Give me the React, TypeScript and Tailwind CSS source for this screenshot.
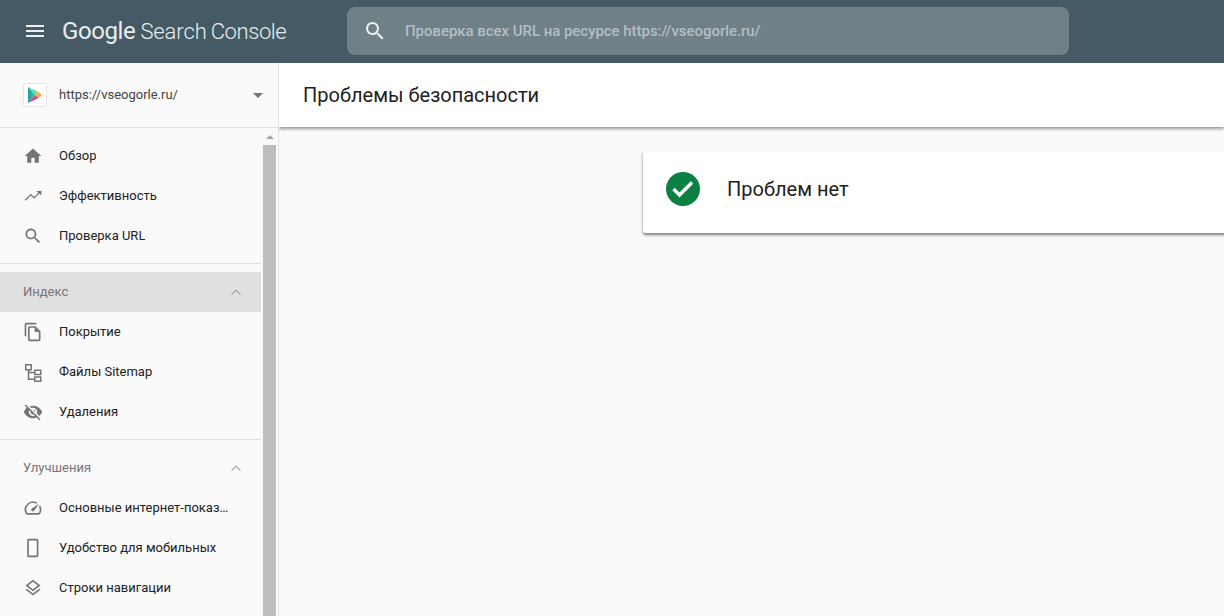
import React from "react";

const paths = {
  menu: "M3 18h18v-2H3v2zm0-5h18v-2H3v2zm0-7v2h18V6H3z",
  search:
    "M15.5 14h-.79l-.28-.27C15.41 12.59 16 11.11 16 9.5 16 5.91 13.09 3 9.5 3S3 5.91 3 9.5 5.91 16 9.5 16c1.61 0 3.09-.59 4.23-1.57l.27.28v.79l5 4.99L20.49 19l-4.99-5zm-6 0C7.01 14 5 11.99 5 9.5S7.01 5 9.5 5 14 7.01 14 9.5 11.99 14 9.5 14z",
  home: "M10 20v-6h4v6h5v-8h3L12 3 2 12h3v8z",
  trend:
    "M16 6l2.29 2.29-4.88 4.88-4-4L2 16.59 3 17.6l6.41-6.2 4 4 6.3-6.29L22 11.4V6z",
  copy: "M16 1H4c-1.1 0-2 .9-2 2v14h2V3h12V1zm-1 4H8c-1.1 0-1.99.9-1.99 2L6 21c0 1.1.89 2 1.99 2H19c1.1 0 2-.9 2-2V11l-6-6zM8 21V7h6v5h5v9H8z",
  eyeOff:
    "M12 7c2.76 0 5 2.24 5 5 0 .65-.13 1.26-.36 1.83l2.92 2.92c1.51-1.26 2.7-2.89 3.43-4.75-1.73-4.39-6-7.5-11-7.5-1.4 0-2.74.25-3.98.7l2.16 2.16C10.74 7.13 11.35 7 12 7zM2 4.27l2.28 2.28.46.46C3.08 8.3 1.78 10.02 1 12c1.73 4.39 6 7.5 11 7.5 1.55 0 3.03-.3 4.38-.84l.42.42L19.73 22 21 20.73 3.27 3 2 4.27zM7.53 9.8l1.55 1.55c-.05.21-.08.43-.08.65 0 1.66 1.34 3 3 3 .22 0 .44-.03.65-.08l1.55 1.55c-.67.33-1.41.53-2.2.53-2.76 0-5-2.24-5-5 0-.79.2-1.53.53-2.2zm4.31-.78l3.15 3.15.02-.16c0-1.66-1.34-3-3-3l-.17.01z",
  speed:
    "M20.38 8.57l-1.23 1.85a8 8 0 0 1-.22 7.58H5.07A8 8 0 0 1 15.58 6.85l1.85-1.23A10 10 0 0 0 3.35 19a2 2 0 0 0 1.72 1h13.85a2 2 0 0 0 1.74-1 10 10 0 0 0-.27-10.44zm-9.79 6.84a2 2 0 0 0 2.83 0l5.66-8.49-8.49 5.66a2 2 0 0 0 0 2.83z",
  phone:
    "M16.5 1h-10C5.4 1 5 1.9 5 3v18c0 1.1.4 2 1.5 2h10c1.1 0 2-.9 2-2V3c0-1.1-.9-2-2-2zm0 20H7V3h9.5v18z",
  layers:
    "M11.99 18.54l-7.37-5.73L3 14.07l9 7 9-7-1.63-1.27zM12 16l7.36-5.73L21 9l-9-7-9 7 1.63 1.27L12 16zm0-11.47L17.74 9 12 13.47 6.26 9 12 4.53z",
  chevron: "M12 8.5l-6.5 6.5 1 1L12 10.5l5.5 5.5 1-1z",
};

const Icon = ({ d, className }: { d: string; className: string }) => (
  <svg viewBox="0 0 24 24" className={className} fill="currentColor">
    <path d={d} />
  </svg>
);

const SitemapIcon = () => (
  <svg
    viewBox="0 0 20 20"
    className="h-5 w-5 shrink-0 text-[#757575]"
    fill="none"
    stroke="currentColor"
    strokeWidth="1.5"
  >
    <rect x="2.75" y="2.75" width="5.5" height="5" />
    <rect x="11.75" y="8.25" width="6" height="4.25" />
    <rect x="11.75" y="15" width="6" height="4.25" />
    <path d="M5.5 8v9.25h6.25M5.5 10.5h6.25" />
  </svg>
);

const NavItem = ({ icon, label }: { icon: string | React.ReactElement; label: string }) => (
  <div className="flex h-10 items-center gap-4 pl-[23px] pr-[30px]">
    {typeof icon === "string" ? (
      <Icon d={icon} className="h-5 w-5 shrink-0 text-[#757575]" />
    ) : (
      icon
    )}
    <span className="truncate text-[13px] text-[#212121]">{label}</span>
  </div>
);

const SectionHead = ({ label, active }: { label: string; active?: boolean }) => (
  <div
    className={`flex h-10 items-center justify-between pl-[23px] pr-4 ${
      active ? "bg-[#e0e0e0]" : ""
    }`}
  >
    <span className="text-[13px] text-[#757575]">{label}</span>
    <Icon d={paths.chevron} className="h-[18px] w-[18px] text-[#9e9e9e]" />
  </div>
);

const PlayLogo = () => (
  <svg viewBox="0 0 14 16" className="h-4 w-[14px]">
    <defs>
      <linearGradient id="playMain" x1="0" y1="0" x2="1" y2="0">
        <stop offset="0" stopColor="#1f9fa8" />
        <stop offset="1" stopColor="#2fd39a" />
      </linearGradient>
      <linearGradient id="playTip" x1="0" y1="0" x2="1" y2="0">
        <stop offset="0" stopColor="#f7c35a" />
        <stop offset="1" stopColor="#f79a45" />
      </linearGradient>
      <linearGradient id="playBottom" x1="0" y1="1" x2="1" y2="0">
        <stop offset="0" stopColor="#c2368f" />
        <stop offset="1" stopColor="#f04a6a" />
      </linearGradient>
    </defs>
    <path d="M0 0v16l7.5-8z" fill="url(#playMain)" />
    <path d="M0 0l7.5 8 3-3z" fill="#6fdb9a" />
    <path d="M0 16l7.5-8 3 3z" fill="url(#playBottom)" />
    <path d="M10.5 5L14 8l-3.5 3-3-3z" fill="url(#playTip)" />
  </svg>
);

export default function App() {
  return (
    <div className="flex h-[616px] w-[1224px] flex-col overflow-hidden bg-[#fafafa] font-['Roboto',sans-serif]">
      <header className="flex h-[63px] shrink-0 items-center bg-[#455a64] pb-px">
        <Icon d={paths.menu} className="ml-[23px] h-6 w-6 text-[#eceff1]" />
        <div className="ml-[15px] flex w-[285px] items-baseline font-light whitespace-nowrap text-[#e8ecee]">
          <span className="text-[24px] font-normal tracking-[-0.4px]">Google</span>
          <span className="ml-[5px] text-[22px] tracking-[-0.1px]">Search</span>
          <span className="ml-[4px] text-[22px] tracking-[-0.4px]">Console</span>
        </div>
        <div className="flex h-12 w-[722px] items-center rounded-lg bg-[#6f8087]">
          <Icon d={paths.search} className="ml-4 h-6 w-6 text-[#eceff1]" />
          <span className="ml-[18px] text-[15px] font-medium tracking-[-0.04px] text-[#b4bec2]">
            Проверка всех URL на ресурсе https://vseogorle.ru/
          </span>
        </div>
      </header>

      <div className="flex min-h-0 flex-1">
        <aside className="flex w-[279px] shrink-0 flex-col border-r border-[#e0e0e0]">
          <div className="flex h-[65px] shrink-0 items-center border-b border-[#e0e0e0] pl-[23px] pr-[15px]">
            <div className="flex h-6 w-6 items-center justify-center rounded-[2px] border border-[#e6e6e6] bg-white">
              <PlayLogo />
            </div>
            <span className="ml-3 flex-1 text-[13px] text-[#424242]">
              https://vseogorle.ru/
            </span>
            <div className="h-0 w-0 border-x-[5px] border-t-[5px] border-x-transparent border-t-[#757575]" />
          </div>

          <div className="flex min-h-0 flex-1">
            <nav className="w-[261px] shrink-0 overflow-hidden pt-2">
              <NavItem icon={paths.home} label="Обзор" />
              <NavItem icon={paths.trend} label="Эффективность" />
              <NavItem icon={paths.search} label="Проверка URL" />
              <div className="mb-2 mt-[7px] border-t border-[#e0e0e0]" />
              <SectionHead label="Индекс" active />
              <NavItem icon={paths.copy} label="Покрытие" />
              <NavItem icon={<SitemapIcon />} label="Файлы Sitemap" />
              <NavItem icon={paths.eyeOff} label="Удаления" />
              <div className="mb-2 mt-[7px] border-t border-[#e0e0e0]" />
              <SectionHead label="Улучшения" />
              <NavItem icon={paths.speed} label="Основные интернет-показатели" />
              <NavItem icon={paths.phone} label="Удобство для мобильных" />
              <NavItem icon={paths.layers} label="Строки навигации" />
            </nav>
            <div className="ml-[2px] flex w-[13px] flex-col">
              <div className="flex h-[17px] items-center justify-center">
                <div className="h-0 w-0 border-x-[4px] border-b-[4px] border-x-transparent border-b-[#a8a8a8]" />
              </div>
              <div className="flex-1 bg-[#bdbdbd]" />
            </div>
          </div>
        </aside>

        <main className="min-w-0 flex-1 overflow-hidden">
          <div className="flex h-16 items-center bg-white pb-px pl-6 text-[20px] font-[450] text-[#212121] shadow-[0_2px_3px_rgba(0,0,0,0.4)]">
            Проблемы безопасности
          </div>
          <div className="ml-[364px] mt-6 flex h-[82px] w-[800px] items-center rounded-[2px] bg-white pb-[6px] pl-[23px] shadow-[0_2px_3px_rgba(0,0,0,0.5)]">
            <svg viewBox="0 0 34 34" className="h-[34px] w-[34px]">
              <circle cx="17" cy="17" r="17" fill="#0b8043" />
              <path
                d="M7.5 17l6 6L26 10.5"
                fill="none"
                stroke="#fff"
                strokeWidth="3.5"
              />
            </svg>
            <span className="ml-[27px] text-[20px] font-[450] text-[#212121]">
              Проблем нет
            </span>
          </div>
        </main>
      </div>
    </div>
  );
}
